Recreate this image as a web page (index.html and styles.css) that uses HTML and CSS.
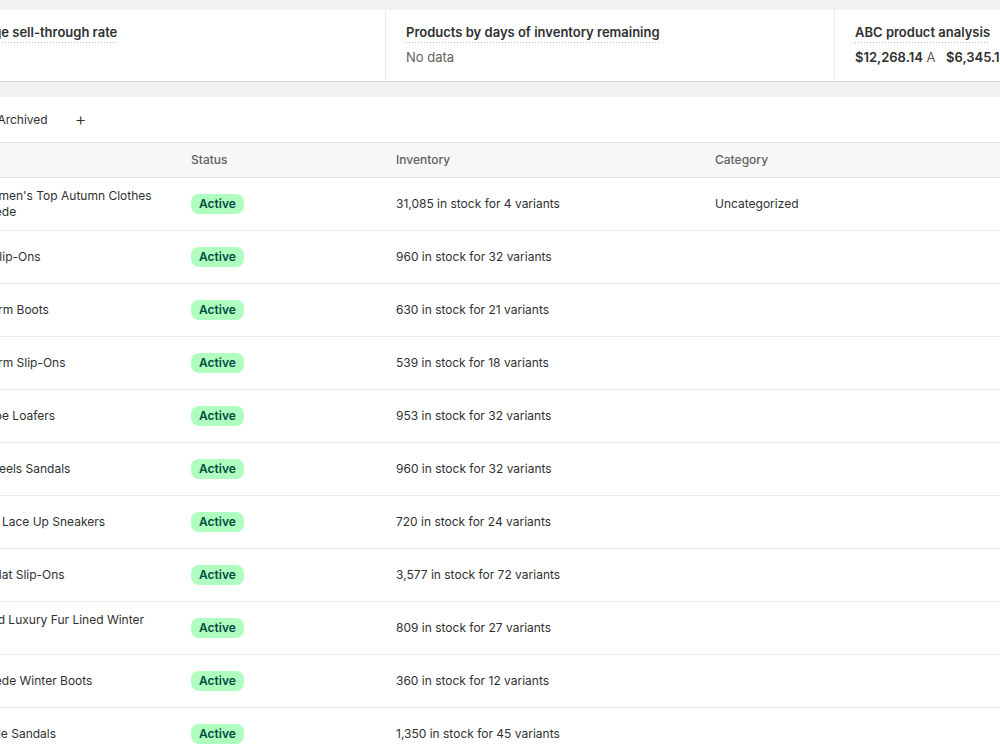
FILE: index.html
```html
<!DOCTYPE html>
<html lang="en">
<head>
    <meta charset="UTF-8">
    <meta name="viewport" content="width=device-width, initial-scale=1.0">
    <title>Products</title>
    <link rel="stylesheet" href="styles.css">
</head>
<body>
    <div class="page">
        <!-- Analytics cards -->
        <div class="metrics">
            <div class="metric">
                <span class="metric-title">Average sell-through rate</span>
                <div class="metric-value"></div>
            </div>
            <div class="metric">
                <span class="metric-title">Products by days of inventory remaining</span>
                <div class="metric-value muted">No data</div>
            </div>
            <div class="metric">
                <span class="metric-title">ABC product analysis</span>
                <div class="metric-value">
                    <b>$12,268.14</b> <span class="grade">A</span>
                    <b>$6,345.12</b> <span class="grade">B</span>
                    <b>$1,204.50</b> <span class="grade">C</span>
                </div>
            </div>
        </div>

        <!-- Products table -->
        <div class="products">
            <div class="tabs">
                <span class="tab selected">All</span>
                <span class="tab">Active</span>
                <span class="tab">Draft</span>
                <span class="tab">Archived</span>
                <span class="tab add">+</span>
            </div>

            <div class="row head">
                <div class="lead"><span class="check"></span>Product</div>
                <div class="cell"></div>
                <div class="cell">Status</div>
                <div class="cell">Inventory</div>
                <div class="cell">Category</div>
            </div>

            <div class="row">
                <div class="lead"><span class="check"></span><span class="thumb"></span></div>
                <div class="cell name">Women's Top Autumn Clothes Suede</div>
                <div class="cell"><span class="badge">Active</span></div>
                <div class="cell">31,085 in stock for 4 variants</div>
                <div class="cell">Uncategorized</div>
            </div>
            <div class="row">
                <div class="lead"><span class="check"></span><span class="thumb"></span></div>
                <div class="cell name">A Slip-Ons</div>
                <div class="cell"><span class="badge">Active</span></div>
                <div class="cell">960 in stock for 32 variants</div>
                <div class="cell"></div>
            </div>
            <div class="row">
                <div class="lead"><span class="check"></span><span class="thumb"></span></div>
                <div class="cell name">Warm Boots</div>
                <div class="cell"><span class="badge">Active</span></div>
                <div class="cell">630 in stock for 21 variants</div>
                <div class="cell"></div>
            </div>
            <div class="row">
                <div class="lead"><span class="check"></span><span class="thumb"></span></div>
                <div class="cell name">Warm Slip-Ons</div>
                <div class="cell"><span class="badge">Active</span></div>
                <div class="cell">539 in stock for 18 variants</div>
                <div class="cell"></div>
            </div>
            <div class="row">
                <div class="lead"><span class="check"></span><span class="thumb"></span></div>
                <div class="cell name">Shoe Loafers</div>
                <div class="cell"><span class="badge">Active</span></div>
                <div class="cell">953 in stock for 32 variants</div>
                <div class="cell"></div>
            </div>
            <div class="row">
                <div class="lead"><span class="check"></span><span class="thumb"></span></div>
                <div class="cell name">Wheels Sandals</div>
                <div class="cell"><span class="badge">Active</span></div>
                <div class="cell">960 in stock for 32 variants</div>
                <div class="cell"></div>
            </div>
            <div class="row">
                <div class="lead"><span class="check"></span><span class="thumb"></span></div>
                <div class="cell name">Kid Lace Up Sneakers</div>
                <div class="cell"><span class="badge">Active</span></div>
                <div class="cell">720 in stock for 24 variants</div>
                <div class="cell"></div>
            </div>
            <div class="row">
                <div class="lead"><span class="check"></span><span class="thumb"></span></div>
                <div class="cell name">A Flat Slip-Ons</div>
                <div class="cell"><span class="badge">Active</span></div>
                <div class="cell">3,577 in stock for 72 variants</div>
                <div class="cell"></div>
            </div>
            <div class="row">
                <div class="lead"><span class="check"></span><span class="thumb"></span></div>
                <div class="cell name">Wild Luxury Fur Lined Winter Set</div>
                <div class="cell"><span class="badge">Active</span></div>
                <div class="cell">809 in stock for 27 variants</div>
                <div class="cell"></div>
            </div>
            <div class="row">
                <div class="lead"><span class="check"></span><span class="thumb"></span></div>
                <div class="cell name">Suede Winter Boots</div>
                <div class="cell"><span class="badge">Active</span></div>
                <div class="cell">360 in stock for 12 variants</div>
                <div class="cell"></div>
            </div>
            <div class="row">
                <div class="lead"><span class="check"></span><span class="thumb"></span></div>
                <div class="cell name">Slide Sandals</div>
                <div class="cell"><span class="badge">Active</span></div>
                <div class="cell">1,350 in stock for 45 variants</div>
                <div class="cell"></div>
            </div>
        </div>
    </div>
</body>
</html>
```

FILE: styles.css
```css
body {
    margin: 0;
    background-color: #f1f1f1;
    font-family: Inter, "Noto Sans", sans-serif;
    font-size: 12px;
    color: #303030;
    overflow: hidden;
}

.page {
    padding-top: 10px;
}

/* Analytics cards, page is scrolled to the right */
.metrics {
    display: flex;
    margin-left: -63px;
    width: 1400px;
    background-color: #ffffff;
    border-bottom: 1px solid #d4d4d4;
}

.metric {
    width: 448px;
    flex-shrink: 0;
    padding: 14px 20px 0;
    box-sizing: border-box;
    height: 71px;
    font-size: 13px;
}

.metric + .metric {
    border-left: 1px solid #ebebeb;
    width: 449px;
}

.metric-title {
    display: inline-block;
    font-weight: 600;
    line-height: 16px;
    padding-bottom: 3px;
    background: linear-gradient(to right, #b8b8b8 1px, transparent 1px) repeat-x left bottom / 3px 1px;
}

.metric-value {
    margin-top: 6px;
    line-height: 16px;
    white-space: nowrap;
}

.metric-value b {
    font-weight: 600;
}

.grade {
    color: #616161;
    margin-right: 7px;
}

.muted {
    color: #616161;
}

/* Products table */
.products {
    margin-top: 15px;
    margin-left: -180px;
    width: 1400px;
    background-color: #ffffff;
}

.tabs {
    display: flex;
    align-items: center;
    gap: 4px;
    height: 45px;
    padding-left: 3px;
}

.tab {
    padding: 0 12px;
    line-height: 28px;
    border-radius: 8px;
    color: #303030;
}

.tab.selected {
    background-color: #ebebeb;
    font-weight: 600;
}

.tab.add {
    margin-left: 2px;
    padding: 0 9px;
    font-size: 18px;
    font-weight: 300;
}

.row {
    display: grid;
    grid-template-columns: 160px 211px 205px 319px 1fr;
    align-items: center;
    min-height: 52px;
    border-bottom: 1px solid #ebebeb;
}

.row.head {
    min-height: 34px;
    background-color: #f7f7f7;
    border-top: 1px solid #e3e3e3;
    border-bottom: 1px solid #e3e3e3;
    color: #616161;
    font-weight: 500;
}

.lead {
    display: flex;
    align-items: center;
    gap: 12px;
    padding-left: 60px;
}

.check {
    width: 14px;
    height: 14px;
    border: 1px solid #8a8a8a;
    border-radius: 4px;
}

.thumb {
    width: 38px;
    height: 38px;
    border: 1px solid #e3e3e3;
    border-radius: 8px;
    background-color: #f7f7f7;
}

.cell {
    line-height: 16px;
    padding-right: 12px;
}

.cell.name {
    padding-right: 33px;
}

.badge {
    display: inline-block;
    padding: 0 8px;
    line-height: 20px;
    border-radius: 8px;
    background-color: #affebf;
    color: #014b40;
    font-weight: 600;
}
```
